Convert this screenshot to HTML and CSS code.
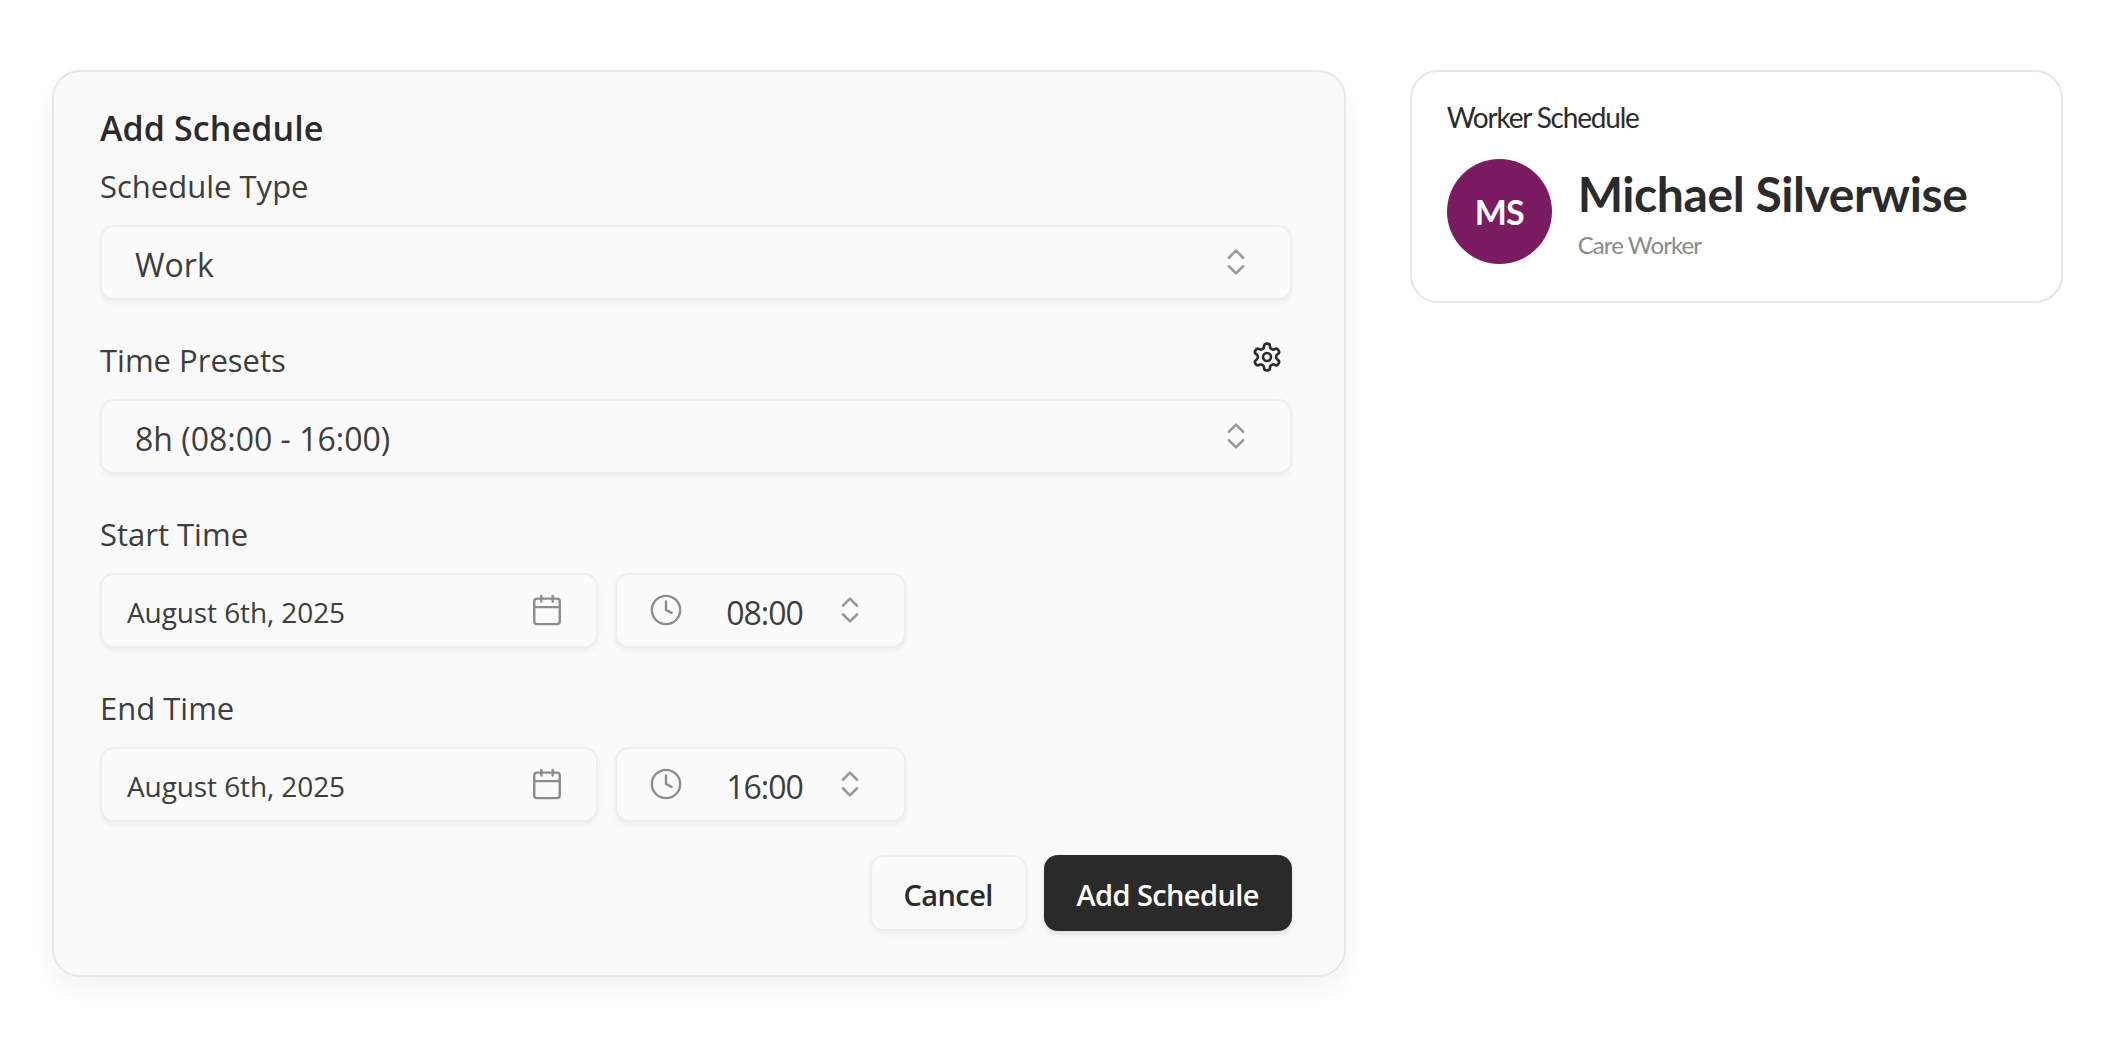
FILE: index.html
```html
<!DOCTYPE html>
<html lang="en">
<head>
  <meta charset="UTF-8" />
  <title>Add Schedule</title>
  <link rel="stylesheet" href="styles.css">
</head>
<body>
  <div class="page">
    <!-- Schedule form -->
    <form class="form-card">
      <h2 class="form-title">Add Schedule</h2>

      <div class="field first">
        <div class="label-row"><label>Schedule Type</label></div>
        <div class="select">
          <span class="value">Work</span>
          <svg class="chevrons" viewBox="0 0 24 24"><path d="m7 15 5 5 5-5"/><path d="m7 9 5-5 5 5"/></svg>
        </div>
      </div>

      <div class="field">
        <div class="label-row">
          <label>Time Presets</label>
          <svg class="gear" viewBox="0 0 24 24"><path d="M12.22 2h-.44a2 2 0 0 0-2 2v.18a2 2 0 0 1-1 1.73l-.43.25a2 2 0 0 1-2 0l-.15-.08a2 2 0 0 0-2.73.73l-.22.38a2 2 0 0 0 .73 2.73l.15.1a2 2 0 0 1 1 1.72v.51a2 2 0 0 1-1 1.74l-.15.09a2 2 0 0 0-.73 2.73l.22.38a2 2 0 0 0 2.73.73l.15-.08a2 2 0 0 1 2 0l.43.25a2 2 0 0 1 1 1.73V20a2 2 0 0 0 2 2h.44a2 2 0 0 0 2-2v-.18a2 2 0 0 1 1-1.73l.43-.25a2 2 0 0 1 2 0l.15.08a2 2 0 0 0 2.73-.73l.22-.39a2 2 0 0 0-.73-2.73l-.15-.08a2 2 0 0 1-1-1.74v-.5a2 2 0 0 1 1-1.74l.15-.09a2 2 0 0 0 .73-2.73l-.22-.38a2 2 0 0 0-2.73-.73l-.15.08a2 2 0 0 1-2 0l-.43-.25a2 2 0 0 1-1-1.73V4a2 2 0 0 0-2-2z"/><circle cx="12" cy="12" r="3"/></svg>
        </div>
        <div class="select">
          <span class="value">8h (08:00 - 16:00)</span>
          <svg class="chevrons" viewBox="0 0 24 24"><path d="m7 15 5 5 5-5"/><path d="m7 9 5-5 5 5"/></svg>
        </div>
      </div>

      <div class="field">
        <div class="label-row"><label>Start Time</label></div>
        <div class="datetime">
          <div class="date-input">
            <span class="value">August 6th, 2025</span>
            <svg class="icon" viewBox="0 0 24 24"><path d="M8 2v4"/><path d="M16 2v4"/><rect x="3" y="4" width="18" height="18" rx="2"/><path d="M3 10h18"/></svg>
          </div>
          <div class="time-input">
            <svg class="icon" viewBox="0 0 24 24"><circle cx="12" cy="12" r="10"/><path d="M12 6v6l4 2"/></svg>
            <span class="value time-value">08:00</span>
            <svg class="chevrons" viewBox="0 0 24 24"><path d="m7 15 5 5 5-5"/><path d="m7 9 5-5 5 5"/></svg>
          </div>
        </div>
      </div>

      <div class="field">
        <div class="label-row"><label>End Time</label></div>
        <div class="datetime">
          <div class="date-input">
            <span class="value">August 6th, 2025</span>
            <svg class="icon" viewBox="0 0 24 24"><path d="M8 2v4"/><path d="M16 2v4"/><rect x="3" y="4" width="18" height="18" rx="2"/><path d="M3 10h18"/></svg>
          </div>
          <div class="time-input">
            <svg class="icon" viewBox="0 0 24 24"><circle cx="12" cy="12" r="10"/><path d="M12 6v6l4 2"/></svg>
            <span class="value time-value">16:00</span>
            <svg class="chevrons" viewBox="0 0 24 24"><path d="m7 15 5 5 5-5"/><path d="m7 9 5-5 5 5"/></svg>
          </div>
        </div>
      </div>

      <div class="actions">
        <button type="button" class="btn btn-cancel">Cancel</button>
        <button type="button" class="btn btn-primary">Add Schedule</button>
      </div>
    </form>

    <!-- Worker info -->
    <aside class="worker-card">
      <h3 class="worker-heading">Worker Schedule</h3>
      <div class="worker-row">
        <div class="avatar">MS</div>
        <div class="worker-info">
          <div class="worker-name">Michael Silverwise</div>
          <div class="worker-role">Care Worker</div>
        </div>
      </div>
    </aside>
  </div>
</body>
</html>
```

FILE: styles.css
```css
* {
  box-sizing: border-box;
}

body {
  margin: 0;
  background: #fff;
  color: #2b2b2b;
  font-family: 'Open Sans', sans-serif;
  overflow: hidden;
}

.page {
  display: flex;
  align-items: flex-start;
  gap: 64px;
  padding: 70px 52px;
}

.form-card {
  width: 1295px;
  height: 907px;
  padding: 31px 52px 0 46px;
  background: #fafafa;
  border: 2px solid #e8e8e8;
  border-radius: 28px;
  box-shadow: 0 12px 28px rgba(0, 0, 0, 0.05);
}

.form-title {
  margin: 0 0 -1px;
  height: 50px;
  font-size: 34px;
  line-height: 50px;
  font-weight: 600;
  letter-spacing: 0.1px;
}

.field {
  margin-top: 26px;
}

.field.first {
  margin-top: 0;
}

.label-row {
  display: flex;
  align-items: center;
  justify-content: space-between;
  height: 73px;
  padding-bottom: 6px;
}

.label-row label {
  font-size: 31px;
  color: #3d3d3d;
}

.gear {
  width: 32px;
  height: 32px;
  margin-right: 9px;
  margin-bottom: 5px;
  fill: none;
  stroke: #2b2b2b;
  stroke-width: 2;
  stroke-linecap: round;
  stroke-linejoin: round;
}

.select,
.date-input,
.time-input {
  display: flex;
  align-items: center;
  height: 75px;
  background: #fbfbfb;
  border: 2px solid #eeeeee;
  border-radius: 14px;
  box-shadow: 0 3px 5px rgba(0, 0, 0, 0.05);
  color: #3d3d3d;
}

/* text sits a little under the centre line of its box */
.value {
  padding-top: 3px;
}

.select {
  justify-content: space-between;
  padding: 0 37px 0 33px;
  font-size: 32px;
}

.chevrons {
  width: 34px;
  height: 34px;
  flex-shrink: 0;
  margin-bottom: 2px;
  fill: none;
  stroke: #999999;
  stroke-width: 1.8;
  stroke-linecap: round;
  stroke-linejoin: round;
}

.datetime {
  display: flex;
  gap: 17px;
}

.date-input {
  justify-content: space-between;
  width: 498px;
  padding: 0 32px 0 25px;
  font-size: 28px;
  letter-spacing: -0.1px;
}

.time-input {
  width: 291px;
  padding: 0 37px 0 32px;
  font-size: 32px;
  letter-spacing: -1px;
}

.time-value {
  flex: 1;
  padding-left: 13px;
  text-align: center;
}

.icon {
  width: 34px;
  height: 34px;
  flex-shrink: 0;
  margin-bottom: 2px;
  fill: none;
  stroke: #8c8c8c;
  stroke-width: 1.7;
  stroke-linecap: round;
  stroke-linejoin: round;
}

.actions {
  display: flex;
  justify-content: flex-end;
  gap: 17px;
  margin-top: 33px;
}

.btn {
  height: 76px;
  padding: 3px 0 0;
  font-family: inherit;
  font-size: 29px;
  font-weight: 600;
  letter-spacing: -0.6px;
  border-radius: 14px;
}

.btn-cancel {
  width: 157px;
  background: #fbfbfb;
  color: #2b2b2b;
  border: 2px solid #eeeeee;
  box-shadow: 0 3px 5px rgba(0, 0, 0, 0.05);
  font-weight: 550;
}

.btn-primary {
  width: 248px;
  background: #2a2a2a;
  color: #fff;
  border: none;
  box-shadow: 0 3px 5px rgba(0, 0, 0, 0.12);
}

.worker-card {
  width: 654px;
  height: 233px;
  padding: 27px 35px;
  background: #fff;
  border: 2px solid #e6e6e6;
  border-radius: 28px;
}

.worker-heading {
  margin: 0;
  font-family: 'Lato', sans-serif;
  font-size: 28px;
  line-height: 36px;
  font-weight: 400;
  letter-spacing: -1.2px;
  color: #2b2b2b;
}

.worker-row {
  display: flex;
  align-items: center;
  gap: 26px;
  margin-top: 24px;
  font-family: 'Lato', sans-serif;
}

.avatar {
  display: flex;
  align-items: center;
  justify-content: center;
  width: 105px;
  height: 105px;
  flex-shrink: 0;
  border-radius: 50%;
  background: #7b1b62;
  color: #fff;
  font-size: 34px;
  font-weight: 700;
  letter-spacing: -1px;
}

.worker-info {
  padding-top: 3px;
}

.worker-name {
  font-size: 48px;
  line-height: 56px;
  font-weight: 700;
  letter-spacing: -0.4px;
  color: #2b2b2b;
}

.worker-role {
  margin-top: 8px;
  font-size: 24px;
  line-height: 30px;
  color: #8a8a8a;
  letter-spacing: -0.9px;
}
```
